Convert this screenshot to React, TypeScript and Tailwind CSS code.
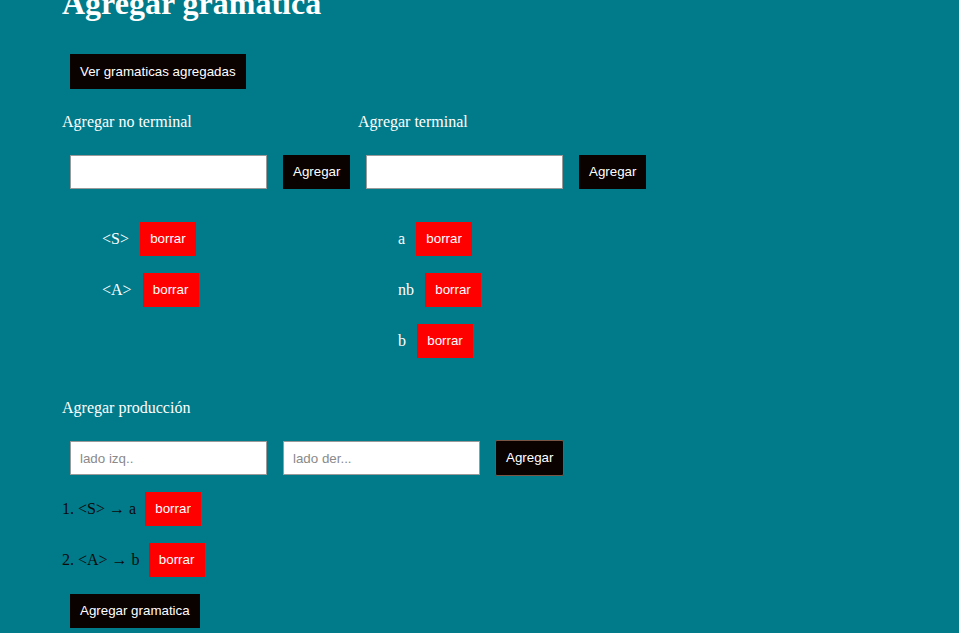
const noTerminales = ["<S>", "<A>"]
const terminales = ["a", "nb", "b"]
const producciones = [
  { izq: "<S>", der: "a" },
  { izq: "<A>", der: "b" },
]

const btn = "h-[34px] px-[10px] bg-[#0a0101] text-white text-[13.33px] font-['Liberation_Sans',Arial,sans-serif]"
const borrar = "h-[34px] w-[56px] bg-[#ff0000] text-white text-[13.33px] font-['Liberation_Sans',Arial,sans-serif]"
const input = "ml-[8px] w-[197px] h-[34px] bg-white border border-[#9a9a9a] px-[9px] text-[13.33px] text-black placeholder:text-[#8a8a8a] font-['Liberation_Sans',Arial,sans-serif] outline-none"

function Column({ title, items }: { title: string; items: string[] }) {
  return (
    <div className="w-[296px] flex flex-col">
      <div className="text-[16px] leading-[18px] text-white">{title}</div>
      <div className="flex items-center mt-[24px]">
        <input className={input} />
        <button className={`${btn} ml-[16px]`}>Agregar</button>
      </div>
      <div className="flex flex-col gap-[17px] mt-[33px] pl-[40px]">
        {items.map(it => (
          <div key={it} className="flex items-center h-[34px]">
            <span className="text-[16px] text-white">{it}</span>
            <button className={`${borrar} ml-[11px]`}>borrar</button>
          </div>
        ))}
      </div>
    </div>
  )
}

export default function App() {
  return (
    <div className="min-h-screen bg-[#017a8a] pl-[62px] flex flex-col overflow-hidden font-['Liberation_Serif',serif]">
      <h1 className="-mt-[15px] text-[32px] leading-[37px] font-bold text-white">Agregar gramatica</h1>
      <div className="mt-[32px]">
        <button className={`${btn} ml-[8px] h-[35px]`}>Ver gramaticas agregadas</button>
      </div>

      <div className="flex mt-[24px]">
        <Column title="Agregar no terminal" items={noTerminales} />
        <Column title="Agregar terminal" items={terminales} />
      </div>

      <div className="mt-[41px] text-[16px] leading-[18px] text-white">Agregar producción</div>
      <div className="flex items-center mt-[24px] h-[34px]">
        <input className={input} placeholder="lado izq.." />
        <input className={`${input} ml-[16px]`} placeholder="lado der..." />
        <button className={`${btn} ml-[15px] h-[36px] px-[10px] border border-[#7a5444] rounded-[2px]`}>Agregar</button>
      </div>

      <div className="flex flex-col gap-[17px] mt-[17px]">
        {producciones.map((p, i) => (
          <div key={i} className="flex items-center h-[34px]">
            <span className="text-[16px] text-[#0a0a0a]">{i + 1}. {p.izq} → {p.der}</span>
            <button className={`${borrar} ml-[9px]`}>borrar</button>
          </div>
        ))}
      </div>

      <div className="mt-[17px]">
        <button className={`${btn} ml-[8px]`}>Agregar gramatica</button>
      </div>
    </div>
  )
}
